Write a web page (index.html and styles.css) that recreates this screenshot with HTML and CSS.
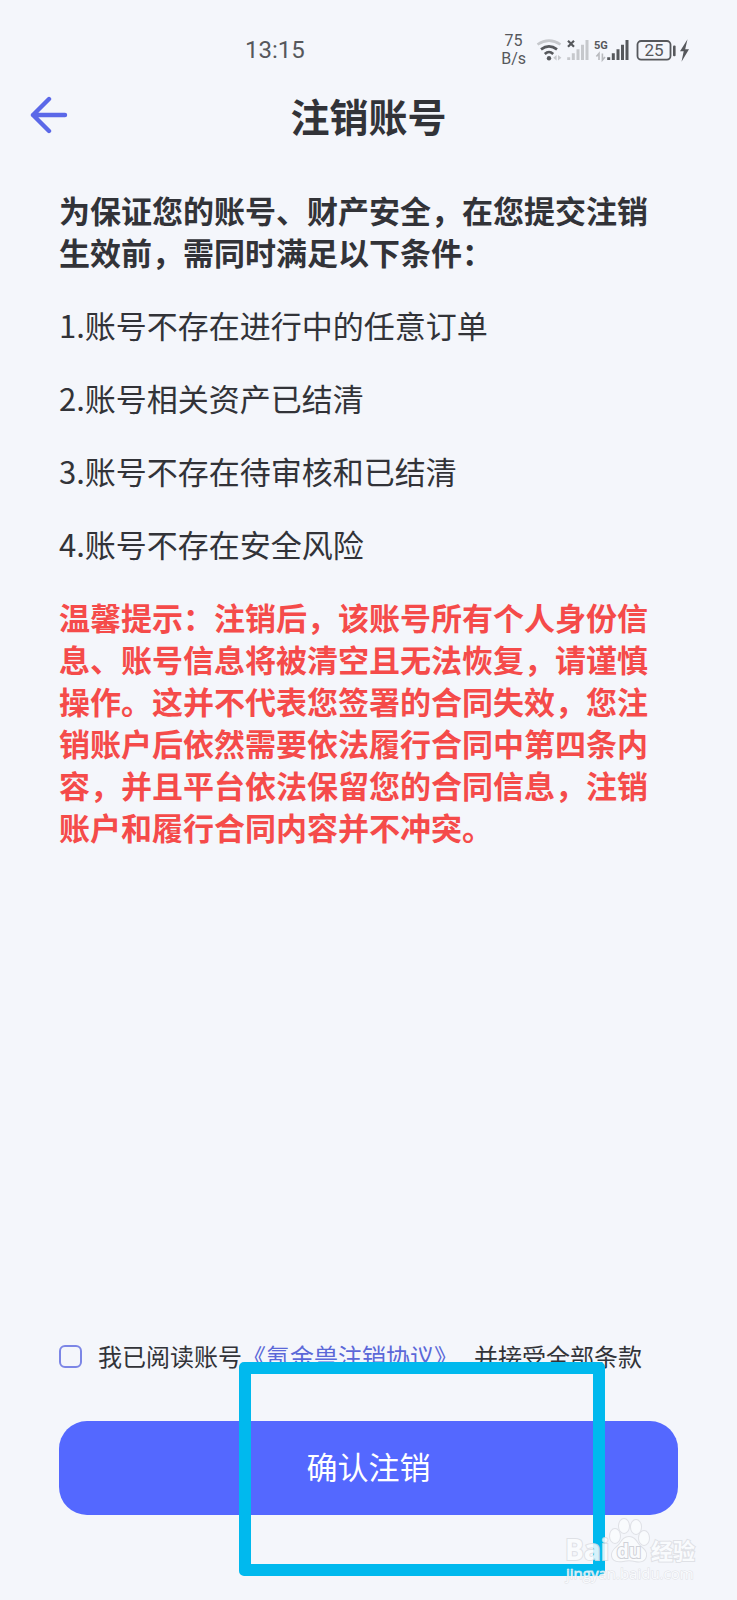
FILE: index.html
```html
<!DOCTYPE html>
<html lang="zh-CN">
<head>
    <meta charset="UTF-8">
    <meta name="viewport" content="width=device-width, initial-scale=1.0">
    <title>注销账号</title>
    <link rel="stylesheet" href="styles.css">
</head>
<body>

    <div class="page">
        <div class="status-bar">
            <span class="time">13:15</span>
            <div class="status-right">
                <div class="speed"><span>75</span><span>B/s</span></div>
                <svg class="status-icons" width="154" height="28" viewBox="0 0 154 28">
                    <!-- wifi -->
                    <g fill="none" stroke-width="2.6">
                        <path d="M1.5 8.5Q13 0.8 24.5 8.5" stroke="#c6c8cc"/>
                        <path d="M5 13.4Q13 7.2 21 13.4" stroke="#56585c"/>
                        <path d="M8.8 18Q13 14 17.2 18" stroke="#56585c"/>
                    </g>
                    <circle cx="13" cy="22.2" r="2.2" fill="#56585c"/>
                    <path d="M20.6 19v5.4l-3.4-2.7zM22 19v5.4l3.4-2.7z" fill="#c6c8cc"/>
                    <!-- sim 1, no signal -->
                    <path d="M32 4.8l6 6M38 4.8l-6 6" stroke="#56585c" stroke-width="2.2"/>
                    <path d="M32.7 24v-2.7M37.3 24v-6.7M42 24V13.3M46.5 24V8.7M51 24V4" stroke="#c6c8cc" stroke-width="3"/>
                    <!-- sim 2 -->
                    <text x="58" y="13" class="net-type">5G</text>
                    <path d="M63 24v-6.5l-2.6 3M66.4 17.5V24l2.6-3" fill="none" stroke="#b8babe" stroke-width="1.6"/>
                    <path d="M72.7 24v-2.7M77.3 24v-6.7M82 24V13.3M86.5 24V8.7M91 24V4" stroke="#56585c" stroke-width="3"/>
                    <!-- battery -->
                    <rect x="101.5" y="5" width="33" height="18.6" rx="3.6" fill="none" stroke="#56585c" stroke-width="1.8"/>
                    <rect x="137" y="9.6" width="2.6" height="10.6" rx="1" fill="#56585c"/>
                    <text x="118" y="20.4" class="battery-level">25</text>
                    <path d="M151.5 3.3l-7.5 11.9h3.7l-2.2 10.5 7.5-12.4h-3.8z" fill="#56585c"/>
                </svg>
            </div>
        </div>

        <header class="header">
            <button type="button" class="back" aria-label="返回">
                <svg width="38" height="38" viewBox="0 0 38 38" fill="none" stroke="#5b68e8" stroke-width="4.4" stroke-linecap="round" stroke-linejoin="round">
                    <path d="M19 3L3 19l16 16M3 19h32"/>
                </svg>
            </button>
            <h1>注销账号</h1>
        </header>

        <main class="content">
            <p class="intro">为保证您的账号、财产安全，在您提交注销生效前，需同时满足以下条件：</p>
            <p>1.账号不存在进行中的任意订单</p>
            <p>2.账号相关资产已结清</p>
            <p>3.账号不存在待审核和已结清</p>
            <p>4.账号不存在安全风险</p>
            <p class="warning">温馨提示：注销后，该账号所有个人身份信息、账号信息将被清空且无法恢复，请谨慎操作。这并不代表您签署的合同失效，您注销账户后依然需要依法履行合同中第四条内容，并且平台依法保留您的合同信息，注销账户和履行合同内容并不冲突。</p>
        </main>

        <form class="footer">
            <div class="agree">
                <input type="checkbox" id="agree" name="agree">
                <label for="agree">我已阅读账号</label>
                <a href="#">《氪金兽注销协议》</a>
                <label for="agree" class="agree-rest">并接受全部条款</label>
            </div>
            <div class="submit">
                <button type="submit" class="confirm">确认注销</button>
                <div class="highlight"></div>
            </div>
        </form>

        <svg class="watermark" width="140" height="74" viewBox="0 0 140 74">
            <g class="mark">
                <text x="2" y="46" class="mark-name">Bai</text>
                <ellipse cx="52" cy="22" rx="5" ry="7"/>
                <ellipse cx="61" cy="12" rx="5" ry="7"/>
                <ellipse cx="73" cy="13" rx="5" ry="7"/>
                <ellipse cx="81" cy="24" rx="5" ry="7"/>
                <path d="M66 23c5 0 7 4 10 8 4 4 8 6 7 11-1 6-7 6-11 5-4-1-8-1-12 0-5 1-11 0-11-6 0-5 4-7 7-10 3-4 5-8 10-8z"/>
                <text x="66" y="44" class="mark-du">du</text>
                <text x="88" y="45" class="mark-cn">经验</text>
                <text x="3" y="65" class="mark-url">jingyan.baidu.com</text>
            </g>
        </svg>
    </div>

</body>
</html>
```
FILE: styles.css
```css
* {
    box-sizing: border-box;
}
body {
    margin: 0;
    background-color: #f4f6fb;
    color: #323338;
    font-family: "Noto Sans CJK SC", sans-serif;
    font-size: 31px;
    line-height: 42px;
}
.page {
    position: relative;
    display: flex;
    flex-direction: column;
    min-height: 100vh;
}
.status-bar {
    display: flex;
    justify-content: space-between;
    align-items: center;
    height: 60px;
    margin-top: 20px;
    padding: 0 47px 0 245px;
    color: #56585c;
    font-family: Roboto, sans-serif;
}
.time {
    font-size: 24px;
}
.status-right {
    display: flex;
    align-items: center;
    gap: 10px;
}
.speed {
    display: flex;
    flex-direction: column;
    align-items: center;
    font-size: 16px;
    line-height: 18px;
}
.net-type {
    fill: #56585c;
    font-size: 11px;
    font-weight: bold;
}
.battery-level {
    fill: #56585c;
    font-size: 17px;
    text-anchor: middle;
}
.header {
    display: grid;
    grid-template-columns: 38px 1fr 38px;
    align-items: center;
    height: 70px;
    padding: 0 30px;
}
.header h1 {
    margin: 0;
    font-size: 39px;
    font-weight: bold;
    text-align: center;
}
.back {
    display: flex;
    padding: 0;
    border: none;
    background: none;
    cursor: pointer;
}
.content {
    padding: 39px 59px 0;
}
.content p {
    margin: 0 0 31px;
}
.content .intro {
    font-weight: bold;
}
.content .warning {
    color: #f54b4a;
    font-weight: bold;
}
.footer {
    margin-top: auto;
    padding: 0 59px 85px;
}
.agree {
    display: flex;
    align-items: center;
    margin-bottom: 44px;
    font-size: 24px;
    white-space: nowrap;
}
.agree input {
    appearance: none;
    width: 23px;
    height: 23px;
    margin: 0 16px 0 0;
    border: 2px solid #7c86e6;
    border-radius: 6px;
}
.agree input:checked {
    background-color: #5468ff;
}
.agree a {
    color: #5b68d8;
    text-decoration: none;
}
.agree-rest {
    margin-left: 16px;
}
.submit {
    position: relative;
}
.confirm {
    display: block;
    width: 100%;
    height: 94px;
    padding: 0 0 6px;
    border: none;
    border-radius: 28px;
    background-color: #5468ff;
    color: #fff;
    font-family: inherit;
    font-size: 31px;
    cursor: pointer;
}
/* frame around the confirm button */
.highlight {
    position: absolute;
    top: -59px;
    right: 73px;
    bottom: -61px;
    left: 180px;
    border: 12px solid #00b9ee;
    border-radius: 5px;
    pointer-events: none;
}
.watermark {
    position: absolute;
    right: 34px;
    bottom: 12px;
    pointer-events: none;
}
.mark {
    fill: #fbfcfe;
    stroke: #dcdee3;
    stroke-width: 2px;
    paint-order: stroke;
    opacity: 0.85;
}
.mark-name {
    font-family: "Open Sans", sans-serif;
    font-size: 28px;
    font-weight: bold;
}
.mark-du {
    stroke: #c9cbd1;
    font-family: "Open Sans", sans-serif;
    font-size: 19px;
    font-weight: bold;
    text-anchor: middle;
}
.mark-cn {
    font-size: 22px;
    font-weight: bold;
}
.mark-url {
    stroke-width: 1px;
    font-family: "Open Sans", sans-serif;
    font-size: 15px;
}
```
